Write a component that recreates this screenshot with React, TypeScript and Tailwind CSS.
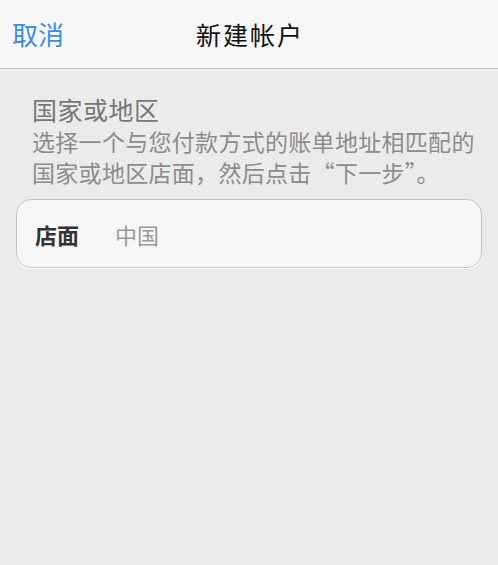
export default function App() {
  return (
    <div className="w-[498px] h-[565px] bg-[#ebebeb] flex flex-col" style={{ fontFamily: '"Noto Sans CJK SC", "Noto Sans", sans-serif' }}>
      <div className="h-[69px] bg-[#f7f7f7] border-b border-[#c6c6c6] flex items-center relative shrink-0">
        <span className="pl-[12px] text-[26px] text-[#3b8de6] leading-none">取消</span>
        <span className="absolute left-0 right-0 text-center text-[25px] text-[#111] leading-none tracking-[2px] pl-[2px] pointer-events-none">新建帐户</span>
      </div>
      <div className="pl-[32px] pr-[4px] pt-[26px]">
        <div className="text-[25px] leading-[29px] text-[#777777] tracking-[0.5px] mb-[2px]">国家或地区</div>
        <div className="text-[23px] leading-[31px] text-[#8c8c8c] whitespace-nowrap tracking-[0.3px]">
          选择一个与您付款方式的账单地址相匹配的
          <br />
          国家或地区店面，然后点击“下一步”。
        </div>
      </div>
      <div className="mx-[16px] mt-[11px] h-[69px] rounded-[15px] border border-[#c4c4c4] bg-[#f7f7f7] shadow-[0_1px_0_#ffffff] flex items-center px-[18px]">
        <span className="text-[22px] font-bold text-[#333] leading-none w-[80px]">店面</span>
        <span className="text-[22px] text-[#9a9a9a] leading-none">中国</span>
      </div>
    </div>
  );
}
